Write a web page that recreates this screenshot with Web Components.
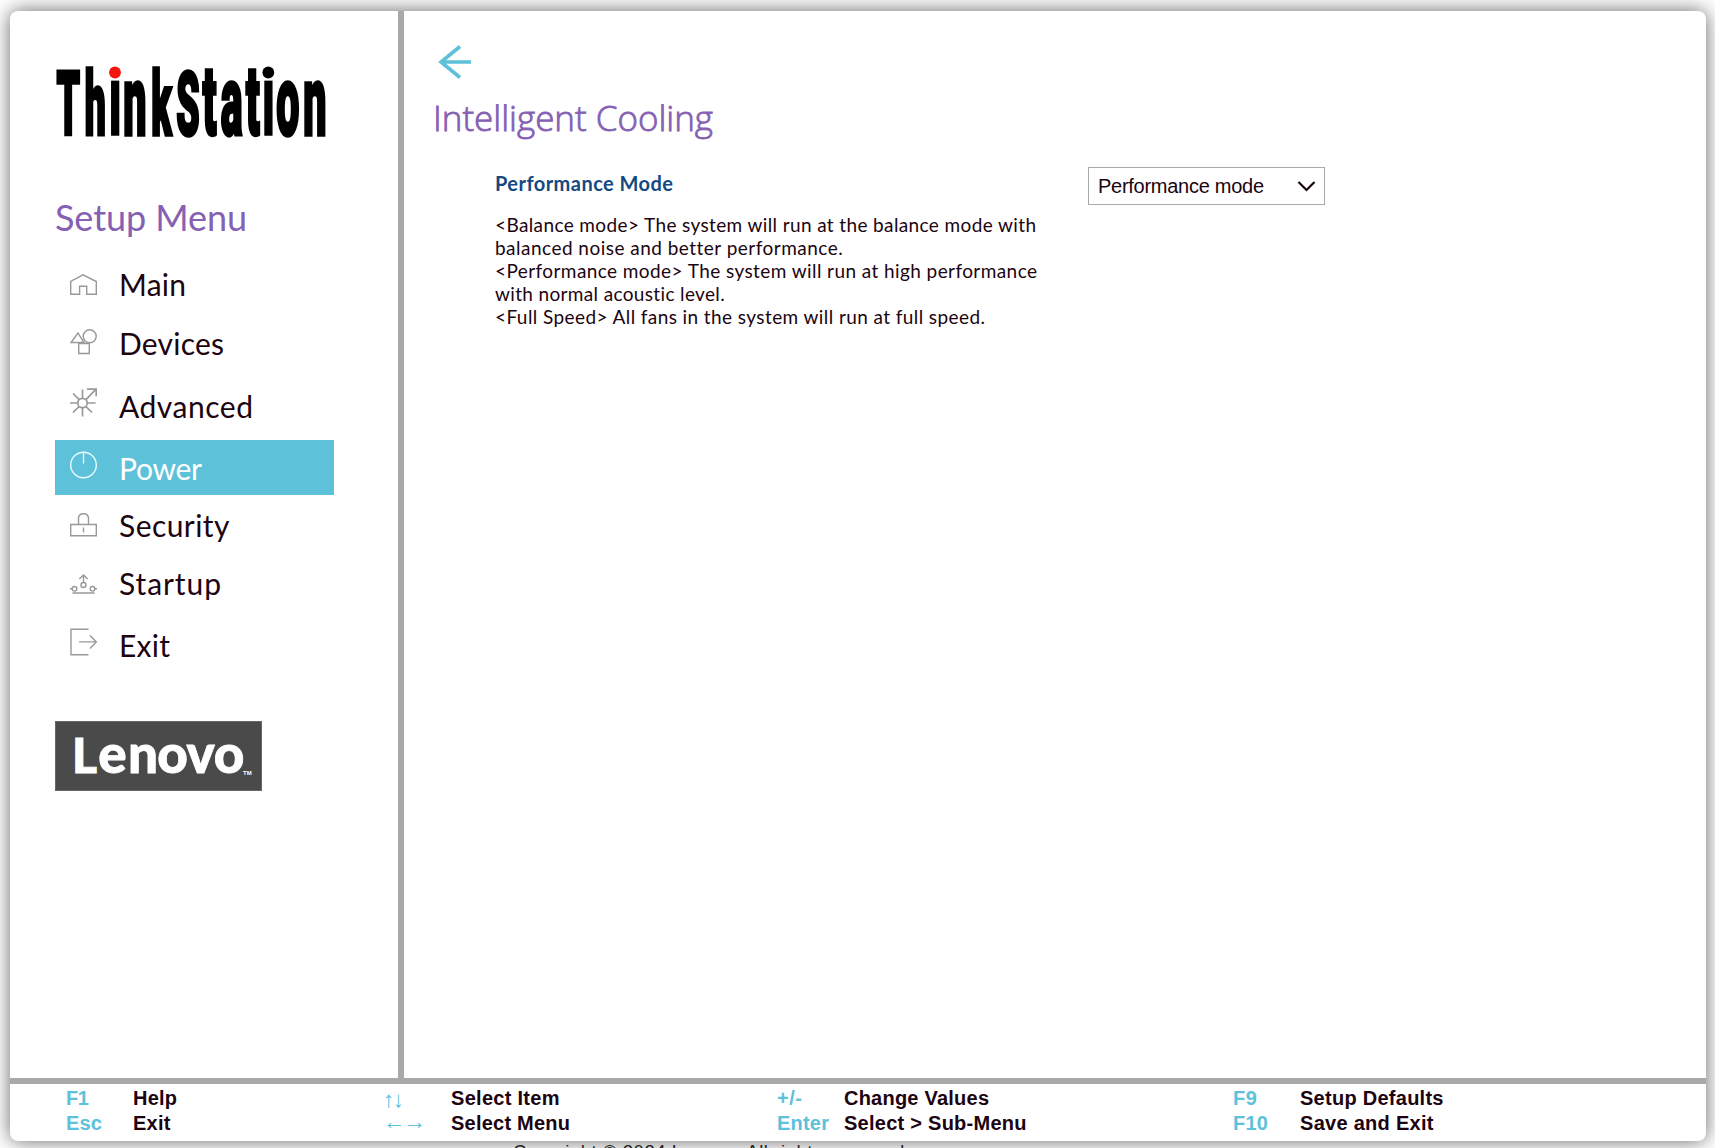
<!DOCTYPE html>
<html lang="en">
<head>
<meta charset="utf-8">
<title>ThinkStation Setup</title>
<style>
html,body{margin:0;background:#fff;height:1148px;overflow:hidden}
body{font-family:Lato,"Liberation Sans",sans-serif;color:#1c0410}
</style>
</head>
<body>
<setup-window></setup-window>
<script>
const define=(name,html,after)=>{
  const t=document.createElement('template');t.innerHTML=html;
  customElements.define(name,class extends HTMLElement{
    constructor(){super();this.attachShadow({mode:'open'}).appendChild(t.content.cloneNode(true));}
    connectedCallback(){if(after)after.call(this,this.shadowRoot);}
  });
};

// Tracks its text out or in so that the run is exactly `w` pixels wide.
define('fit-text',`<style>:host{display:block;white-space:nowrap}span{display:inline-block}</style><span><slot></slot></span>`,function(r){
  const s=r.querySelector('span'),n=this.textContent.length;
  const go=()=>{s.style.letterSpacing='0px';const w=s.getBoundingClientRect().width;
    if(w)s.style.letterSpacing=((+this.getAttribute('w')-w)/Math.max(1,n-1)).toFixed(3)+'px';};
  requestAnimationFrame(go);go();
});

define('think-logo',`<style>:host{display:block;height:72px}svg{display:block;overflow:visible}
text{font:900 89px Roboto,"Liberation Sans",sans-serif;text-anchor:middle;fill:#000;stroke:#000;stroke-width:3.5px}
.x{font-size:98px}</style>
<svg width="273" height="72" viewBox="0 0 273 72"><g transform="scale(.42 1)"><text y="68.500" x="31.5 95.700 143 190 253.6 316.7 367.9 420.7 471 508.3 554.3 618.5">Th<tspan class="x">in</tspan>kS<tspan class="x">tation</tspan></text></g>
<path fill="#fff" d="M54.500-10h11.500v24.500h-11.500zM207.500-10h11.800v24.500h-11.800z"/>
<circle cx="60" cy="6.500" r="5.900" fill="#f5150f"/><circle cx="213.300" cy="6.500" r="5.900"/></svg>`);

define('lenovo-logo',`<style>:host{display:block;width:207px;height:70px;background:#4a4a4a;box-shadow:inset 0 0 0 1px #666}svg{display:block}
text{font-family:Lato,"Liberation Sans",sans-serif;font-weight:900;fill:#fff}
.w{font-size:48px;text-anchor:middle;stroke:#fff;stroke-width:.8px}.l{font-size:53px}.t{font:700 6px "Liberation Sans",sans-serif}</style>
<svg width="207" height="70"><text class="w" y="52" x="29.500">L<tspan class="l" x="57.500 88 117.500 145.500 174">enovo</tspan></text><text class="t" x="188" y="53.500">TM</text></svg>`);

const icons={
 home:[27,21,'<path d="M.7 20.3V7.5L13 .8l13.3 6.7v12.8h-9.6v-8H9.6v8z"/>'],
 devices:[27,26,'<path d="M1 13.5 8 4l4 6.5 2 3zM8.700 14.5h10.600v10H8.700z"/><circle cx="19.700" cy="7.300" r="6.500"/>'],
 advanced:[27,29,'<g stroke-width="1.700"><circle cx="12.500" cy="15" r="4.700"/><path d="M12.500 1.500v9M12.500 20v8.500M0 15h8M17 15h8.500M3 5.500l6.300 6.200M9.300 18.300 3 24.500M15.700 18.300l6.300 6.200M16 11.700 26 1.200M17 1.200h9.200v7"/></g>'],
 power:[27,28,'<circle cx="13.500" cy="14" r="12.800"/><path d="M13.500 1v11.500"/>'],
 security:[27,24,'<path d="M.7 11.500h25.600v11.300H.7zM13.500 14.500v5M8.500 11V5.500q0-4.800 5-4.800t5 4.800V11"/>'],
 startup:[27,21,'<circle cx="13.500" cy="11" r="2.500"/><circle cx="4.500" cy="14.800" r="2.300"/><circle cx="22.500" cy="14.800" r="2.300"/><path d="M13.500 8.500V1M9.300 5l4.200-4 4.200 4M0 14.800h2.200M24.800 14.800H27M2.500 19h22"/>'],
 exit:[27,28,'<path d="M18.500 1.200H1v25.500h17.500M9 13.900h17.300M20 7.500l6.300 6.400L20 20.500"/>']
};
define('menu-item',`<style>
:host{display:flex;align-items:flex-start;box-sizing:border-box;width:279px;height:var(--h);padding-left:15px;gap:22px;color:#1c0410;--ink:#999}
:host([active]){background:#5ec1da;color:#fff;--ink:#e9fbff}
svg{display:block;flex:none;margin-top:var(--iy);fill:none;stroke:var(--ink);stroke-width:1.4}
div{margin-top:var(--ty);font-size:30px;line-height:40px}</style><svg></svg><div><slot></slot></div>`,function(r){
  const i=icons[this.getAttribute('icon')],s=r.querySelector('svg');
  s.setAttribute('width',i[0]);s.setAttribute('height',i[1]);s.innerHTML=i[2];
});

define('setup-menu',`<style>
:host{display:block;box-sizing:border-box;width:388px;padding:55px 0 0 45px}
.t{margin:54px 0 0;color:#8560b3;font-size:36px;line-height:50px}
nav{display:flex;flex-direction:column;margin-top:12px}
lenovo-logo{margin-top:46px}</style>
<think-logo></think-logo>
<fit-text class="t" w="192">Setup Menu</fit-text>
<nav>
<menu-item icon="home" style="--h:62px;--iy:20px;--ty:10px"><fit-text w="67">Main</fit-text></menu-item>
<menu-item icon="devices" style="--h:61px;--iy:13px;--ty:7px"><fit-text w="105">Devices</fit-text></menu-item>
<menu-item icon="advanced" style="--h:63px;--iy:11px;--ty:9px"><fit-text w="134">Advanced</fit-text></menu-item>
<menu-item active icon="power" style="--h:55px;--iy:11px;--ty:8px"><fit-text w="83">Power</fit-text></menu-item>
<menu-item icon="security" style="--h:60px;--iy:18px;--ty:10px"><fit-text w="110.500">Security</fit-text></menu-item>
<menu-item icon="startup" style="--h:57px;--iy:19px;--ty:8px"><fit-text w="102">Startup</fit-text></menu-item>
<menu-item icon="exit" style="--h:63px;--iy:16px;--ty:13px"><fit-text w="51">Exit</fit-text></menu-item>
</nav>
<lenovo-logo></lenovo-logo>`);

define('drop-down',`<style>:host{display:flex;align-items:center;justify-content:space-between;box-sizing:border-box;width:237px;height:38px;border:1px solid #a9a9a9;padding:0 8px 0 9px;font:20px/36px "Liberation Sans",sans-serif;color:#1c0410}
svg{fill:none;stroke:#1c0410;stroke-width:2.2}</style><slot></slot><svg width="19" height="12"><path d="M1.500 2 9.500 10l8-8"/></svg>`);

define('setting-row',`<style>:host{display:flex;align-items:flex-start;padding-left:91px}
.c{width:593px}.n{display:block;color:#144982;font-weight:700;font-size:20px;line-height:28px}
.d{margin-top:16px;font-size:19px;line-height:23px}
drop-down{margin-top:-2px}</style>
<div class="c"><fit-text class="n" w="178">Performance Mode</fit-text>
<div class="d"><fit-text w="541">&lt;Balance mode&gt; The system will run at the balance mode with</fit-text>
<fit-text w="347">balanced noise and better performance.</fit-text>
<fit-text w="542">&lt;Performance mode&gt; The system will run at high performance</fit-text>
<fit-text w="230">with normal acoustic level.</fit-text>
<fit-text w="490">&lt;Full Speed&gt; All fans in the system will run at full speed.</fit-text></div></div>
<drop-down><fit-text w="166">Performance mode</fit-text></drop-down>`);

define('setup-page',`<style>:host{display:block;flex:1;box-sizing:border-box;border-left:6px solid #a9a9a9;padding:34px 0 0}
svg{display:block;margin-left:34px;fill:none;stroke:#5ec1da;stroke-width:3.6}
.t{margin:14px 0 0 29px;color:#8560b3;font-family:"Open Sans","Liberation Sans",sans-serif;font-weight:300;-webkit-text-stroke:.8px #8560b3;font-size:35px;line-height:50px}
setting-row{margin-top:26px}</style>
<svg width="34" height="34"><path d="M33 17H3M22 1.500 3 17l19 15.500"/></svg>
<fit-text class="t" w="280">Intelligent Cooling</fit-text>
<setting-row></setting-row>`);

define('key-group',`<style>:host{display:grid;grid-template-columns:67px auto;grid-template-rows:25px 25px;font:700 20px/25px "Liberation Sans",sans-serif}
::slotted([k]){color:#5ec1da}::slotted([a]){font-weight:400;font-size:22.500px;margin:1px 0 0 -1px}::slotted([a="h"]){margin-top:-2px}</style><slot></slot>`);

define('key-bar',`<style>:host{display:grid;grid-template-columns:318px 393px 456px 1fr;box-sizing:border-box;height:63px;border-top:6px solid #a9a9a9;padding:2px 0 0 56px}</style>
<key-group><fit-text k w="23">F1</fit-text><fit-text w="44">Help</fit-text><fit-text k w="36">Esc</fit-text><fit-text w="37.500">Exit</fit-text></key-group>
<key-group><fit-text k a="v" w="21">↑↓</fit-text><fit-text w="108.500">Select Item</fit-text><fit-text k a="h" w="43">←→</fit-text><fit-text w="119">Select Menu</fit-text></key-group>
<key-group><fit-text k w="25">+/-</fit-text><fit-text w="145">Change Values</fit-text><fit-text k w="52">Enter</fit-text><fit-text w="182.500">Select &gt; Sub-Menu</fit-text></key-group>
<key-group><fit-text k w="24">F9</fit-text><fit-text w="143.500">Setup Defaults</fit-text><fit-text k w="35">F10</fit-text><fit-text w="133.500">Save and Exit</fit-text></key-group>`);

define('setup-window',`<style>:host{display:block;padding:11px 9px 0 10px;height:1148px;box-sizing:border-box;overflow:hidden}
.w{display:flex;flex-direction:column;height:1130px;border-radius:8px;background:#fff;box-shadow:0 0 20px rgba(0,0,0,.6);overflow:hidden}
.b{display:flex;height:1067px}
.c{margin:0 0 0 503px;font:18.500px/21px "Liberation Sans",sans-serif;color:#222;height:6px;position:relative}</style>
<div class="w"><div class="b"><setup-menu></setup-menu><setup-page></setup-page></div><key-bar></key-bar></div>
<div class="c"><fit-text w="397">Copyright © 2024 Lenovo. All rights reserved.</fit-text></div>`);
</script>
</body>
</html>
